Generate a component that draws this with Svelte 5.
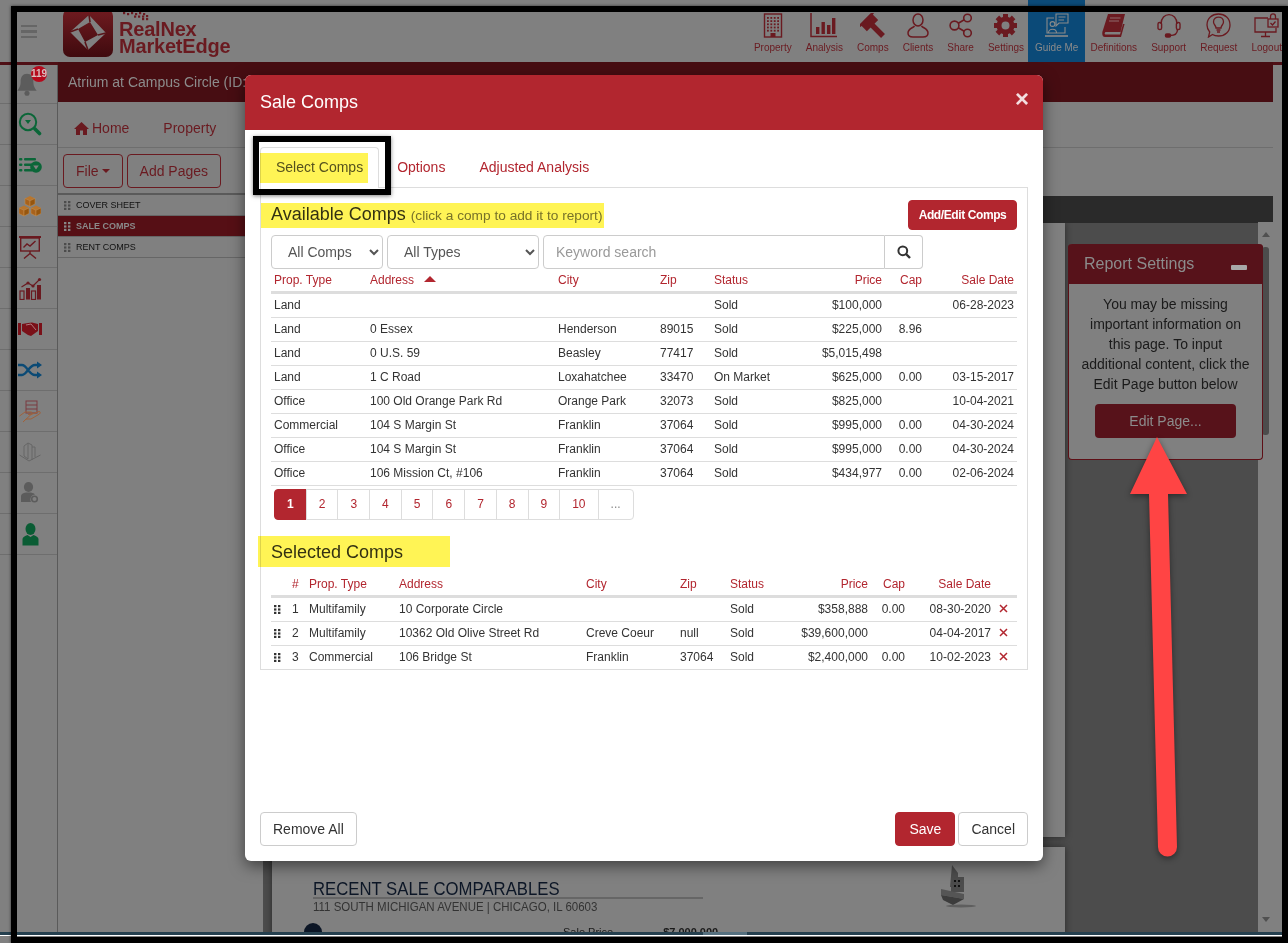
<script>
  const gearAngles = [0, 45, 90, 135, 180, 225, 270, 315];
  const windowDots = [];
  for (let r = 0; r < 5; r++) for (let c = 0; c < 4; c++) windowDots.push([4 + c * 3.4, 4 + r * 3.2]);
  const logoDots = [[0, 0], [4, 1], [8, 0], [12, 1], [16, 0], [20, 1], [11, 3.5], [15, 3.5], [19, 3.5], [23, 3], [19, 6], [23, 6]];

  const available = [
    ["Land", "", "", "", "Sold", "$100,000", "", "06-28-2023"],
    ["Land", "0 Essex", "Henderson", "89015", "Sold", "$225,000", "8.96", ""],
    ["Land", "0 U.S. 59", "Beasley", "77417", "Sold", "$5,015,498", "", ""],
    ["Land", "1 C Road", "Loxahatchee", "33470", "On Market", "$625,000", "0.00", "03-15-2017"],
    ["Office", "100 Old Orange Park Rd", "Orange Park", "32073", "Sold", "$825,000", "", "10-04-2021"],
    ["Commercial", "104 S Margin St", "Franklin", "37064", "Sold", "$995,000", "0.00", "04-30-2024"],
    ["Office", "104 S Margin St", "Franklin", "37064", "Sold", "$995,000", "0.00", "04-30-2024"],
    ["Office", "106 Mission Ct, #106", "Franklin", "37064", "Sold", "$434,977", "0.00", "02-06-2024"]
  ];

  const selected = [
    ["Multifamily", "10 Corporate Circle", "", "", "Sold", "$358,888", "0.00", "08-30-2020"],
    ["Multifamily", "10362 Old Olive Street Rd", "Creve Coeur", "null", "Sold", "$39,600,000", "", "04-04-2017"],
    ["Commercial", "106 Bridge St", "Franklin", "37064", "Sold", "$2,400,000", "0.00", "10-02-2023"]
  ];

  const pages = ["1", "2", "3", "4", "5", "6", "7", "8", "9", "10", "..."];
  const reportPages = ["Cover Sheet", "Sale Comps", "Rent Comps"];
</script>

{#snippet grip(c)}
  <svg class="grip" width="7" height="9" viewBox="0 0 7 9" fill={c}>
    <rect x="0" y="0" width="2.4" height="2.2" /><rect x="4" y="0" width="2.4" height="2.2" />
    <rect x="0" y="3.4" width="2.4" height="2.2" /><rect x="4" y="3.4" width="2.4" height="2.2" />
    <rect x="0" y="6.8" width="2.4" height="2.2" /><rect x="4" y="6.8" width="2.4" height="2.2" />
  </svg>
{/snippet}

{#snippet cube(x, y)}
  <g transform="translate({x} {y})">
    <path d="M5 0 L10 2.4 L5 4.8 L0 2.4 Z" fill="#b8762e" />
    <path d="M0 2.4 L5 4.8 V10.5 L0 8 Z" fill="#a8621c" stroke="#c8904e" stroke-width="0.5" />
    <path d="M10 2.4 L5 4.8 V10.5 L10 8 Z" fill="#96560f" stroke="#c8904e" stroke-width="0.5" />
  </g>
{/snippet}

<div class="app">
  <header class="topbar">
    <div class="burger"><i></i><i></i><i></i></div>
    <div class="logo">
      <svg class="logo-mark" width="50" height="48" viewBox="0 0 50 48">
        <defs>
          <linearGradient id="lg" x1="0" y1="0" x2="0" y2="1">
            <stop offset="0" stop-color="#701b20" />
            <stop offset="1" stop-color="#3f0a0e" />
          </linearGradient>
        </defs>
        <rect width="50" height="48" rx="7" fill="url(#lg)" />
        <path d="M26 6 L43 24 L25 41 L7 23 Z M27 13 L15 20 L22 33 L35 26 Z" fill="#808080" fill-rule="evenodd" />
        <path d="M15 20 L7 23 M27 13 L26 6 M35 26 L43 24 M22 33 L25 41" stroke="#5a1418" stroke-width="1.6" />
      </svg>
      <div class="logo-side">
        <svg class="logo-dots" width="28" height="9" viewBox="0 0 28 9" fill="#6a1a20">
          {#each logoDots as d}<rect x={d[0]} y={d[1]} width="2.2" height="2.2" />{/each}
        </svg>
        <div class="logo-text"><span>RealNex</span><span>MarketEdge</span></div>
      </div>
    </div>
    <nav class="mainnav">
      <div class="nav-item">
        <svg width="20" height="25" viewBox="0 0 20 25" fill="none" stroke="#6a1a20">
          <rect x="1.5" y="1" width="17" height="23" stroke-width="1.4" />
          {#each windowDots as d}<rect x={d[0]} y={d[1]} width="1.8" height="1.8" fill="#6a1a20" stroke="none" />{/each}
          <rect x="7.5" y="20" width="5" height="4" fill="#6a1a20" stroke="none" />
        </svg>
        <span>Property</span>
      </div>
      <div class="nav-item">
        <svg width="28" height="25" viewBox="0 0 28 25" fill="#6a1a20">
          <path d="M1 0 V23.5 H27" fill="none" stroke="#6a1a20" stroke-width="1.5" />
          <rect x="6" y="14" width="3.4" height="7" /><rect x="11.5" y="9" width="3.4" height="12" />
          <rect x="17" y="12" width="3.4" height="9" /><rect x="22" y="5" width="3.4" height="16" />
        </svg>
        <span>Analysis</span>
      </div>
      <div class="nav-item">
        <svg width="25" height="25" viewBox="0 0 25 25" fill="#6a1a20">
          <rect x="-8" y="-5" width="16" height="10" transform="translate(9 9) rotate(-45)" />
          <rect x="-9.5" y="-1" width="19" height="2" transform="translate(6.5 6.5) rotate(-45)" />
          <path d="M9 9 L23 23" stroke="#6a1a20" stroke-width="5.5" />
        </svg>
        <span>Comps</span>
      </div>
      <div class="nav-item">
        <svg width="22" height="25" viewBox="0 0 22 25" fill="none" stroke="#6a1a20" stroke-width="1.5">
          <ellipse cx="11" cy="7" rx="5" ry="6" />
          <path d="M7.5 13 C6 15 1 15.5 1 20 C1 23 3 24 6 24 H16 C19 24 21 23 21 20 C21 15.5 16 15 14.5 13" />
        </svg>
        <span>Clients</span>
      </div>
      <div class="nav-item">
        <svg width="24" height="25" viewBox="0 0 24 25" fill="none" stroke="#6a1a20" stroke-width="1.6">
          <circle cx="5.5" cy="12.5" r="4.4" /><circle cx="18.5" cy="5" r="3.8" /><circle cx="18.5" cy="20" r="3.8" />
          <path d="M9.3 10.3 L15.2 6.8 M9.3 14.7 L15.2 18.2" />
        </svg>
        <span>Share</span>
      </div>
      <div class="nav-item">
        <svg width="25" height="25" viewBox="0 0 25 25">
          <circle cx="12.5" cy="12.5" r="6.5" fill="none" stroke="#6a1a20" stroke-width="5" />
          {#each gearAngles as a}
            <rect x="10" y="1" width="5" height="5" fill="#6a1a20" transform="rotate({a} 12.5 12.5)" />
          {/each}
        </svg>
        <span>Settings</span>
      </div>
      <div class="nav-item guide">
        <svg width="25" height="25" viewBox="0 0 25 25" fill="none" stroke="#8a8a8a" stroke-width="1.1">
          <path d="M10 5 H3 V20 H21 V14" />
          <path d="M1 23 H24" stroke-width="1.6" />
          <path d="M12 1 H24 V10 H15 L12 13 Z" />
          <path d="M14.5 4 H21.5 M14.5 7 H20" />
          <circle cx="8.5" cy="11" r="2.4" />
          <path d="M4.5 20 C4.5 15 12.5 15 12.5 20" />
        </svg>
        <span>Guide Me</span>
      </div>
      <div class="nav-item">
        <svg width="24" height="25" viewBox="0 0 24 25" fill="#6a1a20">
          <path d="M6 1 H23 L18.5 19 H4 C2.5 19 2 21.5 4 21.5 H18 L19 18 L21 11 L22.6 11 L19 24 H3 C-0.5 24 0 19 1 17 Z" />
          <path d="M8 5 H18.5 M7 8 H17" stroke="#8f6a6c" stroke-width="1" />
        </svg>
        <span>Definitions</span>
      </div>
      <div class="nav-item">
        <svg width="24" height="25" viewBox="0 0 24 25" fill="none" stroke="#6a1a20" stroke-width="1.4">
          <path d="M4 11 C4 -1.5 20 -1.5 20 11" />
          <rect x="1" y="9.5" width="3.6" height="7" rx="1.6" /><rect x="19.4" y="9.5" width="3.6" height="7" rx="1.6" />
          <path d="M20.5 16.5 C20.5 21 17 22.5 13 22.5" />
          <rect x="8.5" y="21" width="5" height="3" rx="1.2" fill="#6a1a20" />
        </svg>
        <span>Support</span>
      </div>
      <div class="nav-item">
        <svg width="25" height="25" viewBox="0 0 25 25" fill="none" stroke="#6a1a20" stroke-width="1.3">
          <path d="M12.5 1 C19 1 24 5.5 24 12 C24 18.5 19 23 12.5 23 C10 23 8 22.5 6.5 21.5 L2.5 24 L3.7 19 C2 17 1 15 1 12 C1 5.5 6 1 12.5 1 Z" />
          <path d="M10 15 C10 12.5 7.5 11.5 7.5 9 C7.5 2.5 17.5 2.5 17.5 9 C17.5 11.5 15 12.5 15 15 Z" />
          <path d="M10.5 17 H14.5 M11 19 H14" />
        </svg>
        <span>Request</span>
      </div>
      <div class="nav-item">
        <svg width="25" height="25" viewBox="0 0 25 25" fill="none" stroke="#6a1a20" stroke-width="1.3">
          <path d="M14 5 H1 V19 H22 V15" />
          <path d="M11.5 19 V23 M7 23.5 H16" />
          <rect x="14" y="6" width="10" height="8" fill="#808080" />
          <path d="M16.5 6 V3.5 C16.5 0 21.5 0 21.5 3.5 V6" />
          <path d="M16.5 10 L18.5 12 L21.5 8.5" />
        </svg>
        <span>Logout</span>
      </div>
    </nav>
  </header>

  <div class="workspace">
    <aside class="sidebar">
      <div class="side-row bell">
        <svg width="22" height="24" viewBox="0 0 26 28" fill="#5c5c5c">
          <path d="M13 2 C8 2 5.5 6 5.5 11 C5.5 17 3.5 19 1.5 22 H24.5 C22.5 19 20.5 17 20.5 11 C20.5 6 18 2 13 2 Z" />
          <circle cx="13" cy="25" r="3" />
        </svg>
        <span class="badge">119</span>
      </div>
      <div class="side-row">
        <svg width="24" height="24" viewBox="0 0 24 24" fill="none" stroke="#0b6638" stroke-width="2">
          <circle cx="10" cy="10" r="8.2" />
          <path d="M7 8 H13 L10 12 Z" fill="#0b6638" stroke="none" />
          <path d="M17 17 L21.5 21.5" stroke-width="3.6" stroke-linecap="round" />
        </svg>
      </div>
      <div class="side-row">
        <svg width="23" height="16" viewBox="0 0 23 16" fill="#0b6638">
          <rect x="0" y="1" width="3.4" height="2.6" rx="1" /><rect x="5" y="1" width="12" height="2.6" rx="1" />
          <rect x="0" y="6.5" width="3.4" height="2.6" rx="1" /><rect x="5" y="6.5" width="9" height="2.6" rx="1" />
          <rect x="0" y="12" width="3.4" height="2.6" rx="1" /><rect x="5" y="12" width="9" height="2.6" rx="1" />
          <circle cx="17" cy="10" r="5.8" />
          <path d="M14.2 8.4 H19.8 L17 12.6 Z" fill="#808080" />
        </svg>
      </div>
      <div class="side-row">
        <svg width="22" height="21" viewBox="0 0 22 21">
          {@render cube(6, 0)}
          {@render cube(0, 9.5)}
          {@render cube(12, 9.5)}
        </svg>
      </div>
      <div class="side-row">
        <svg width="22" height="23" viewBox="0 0 22 23" fill="none" stroke="#6a1a20" stroke-width="1.4">
          <path d="M0 1 H22" stroke-width="2" />
          <rect x="1.7" y="2" width="18.6" height="13" />
          <path d="M4.5 11.5 L8 8 L11 10 L16.5 5" />
          <path d="M11 15 V18 M11 17.5 L5 22.5 M11 17.5 L17 22.5" />
        </svg>
      </div>
      <div class="side-row">
        <svg width="23" height="23" viewBox="0 0 23 23">
          <rect x="1" y="14" width="4" height="8.5" fill="none" stroke="#6a1a20" stroke-width="1.2" />
          <rect x="7" y="11" width="4" height="11.5" fill="#6a1a20" />
          <rect x="12.5" y="14" width="4" height="8.5" fill="none" stroke="#6a1a20" stroke-width="1.2" />
          <rect x="18" y="8" width="4" height="14.5" fill="#6a1a20" />
          <path d="M2.5 10 L9 6 L14 9 L20.5 2.5" fill="none" stroke="#6a1a20" stroke-width="1.2" />
          <circle cx="9" cy="6" r="1.6" fill="#6a1a20" /><circle cx="14" cy="9" r="1.6" fill="#6a1a20" /><circle cx="20.5" cy="2.5" r="1.6" fill="#6a1a20" />
        </svg>
      </div>
      <div class="side-row">
        <svg width="24" height="14" viewBox="0 0 24 14" fill="#7a1018">
          <rect x="0" y="1" width="3" height="12" /><rect x="21" y="1" width="3" height="12" />
          <path d="M4 2 L10 1 L14 0.5 L20 2 V9 L13 14 L10 13 L4 9 Z" />
          <path d="M8 3 L13 2 L18 8" fill="none" stroke="#b07a7e" stroke-width="1" />
        </svg>
      </div>
      <div class="side-row">
        <svg width="24" height="19" viewBox="0 0 24 19" fill="none" stroke="#0b4a75" stroke-width="2.4">
          <path d="M0 4 H4 C9 4 11 14 17 14 H20 M0 14 H4 C9 14 11 4 17 4 H20" />
          <path d="M19 0.5 L24 4 L19 7.5 Z M19 10.5 L24 14 L19 17.5 Z" fill="#0b4a75" stroke="none" />
        </svg>
      </div>
      <div class="side-row">
        <svg width="22" height="23" viewBox="0 0 22 23" fill="none" stroke="#a0623a" stroke-width="1">
          <rect x="7" y="1" width="11" height="12" stroke="#7a3a40" />
          <path d="M7 5 H18 M7 9 H18" stroke="#7a3a40" />
          <path d="M0.5 16 L6 12 H12 C13.5 12 13.5 14 12 14.5 H9 M12 14.5 L20 11.5 C21.5 11.5 21.5 13 20.5 14 L12 19 H7 L4 22 Z" />
        </svg>
      </div>
      <div class="side-row">
        <svg width="22" height="20" viewBox="0 0 22 20" fill="none" stroke="#666" stroke-width="1">
          <path d="M5 4 L9 1 V17 L5 14 Z M9 1 L13 3 V18 M13 5 H16 V15" />
          <path d="M0.5 13 L10 19 L21.5 13" />
        </svg>
      </div>
      <div class="side-row">
        <svg width="18" height="22" viewBox="0 0 18 22" fill="#5c5c5c">
          <ellipse cx="7.5" cy="5" rx="4.6" ry="5" />
          <path d="M0 20 V14 C0 12 2 11 5 10.5 H10 C12 11 13 11.5 14 12.5 A5 5 0 0 0 10 20 Z" />
          <circle cx="13.5" cy="17" r="2.8" fill="none" stroke="#5c5c5c" stroke-width="1.6" />
        </svg>
      </div>
      <div class="side-row">
        <svg width="17" height="23" viewBox="0 0 17 23" fill="#0a5c34">
          <ellipse cx="8.5" cy="6" rx="5" ry="6" />
          <path d="M0.5 22.5 V16 C0.5 14 3 13 5.5 12 L8.5 14 L11.5 12 C14 13 16.5 14 16.5 16 V22.5 Z" />
        </svg>
      </div>
    </aside>

    <main class="content">
      <div class="titlebar">
        <span class="title">Atrium at Campus Circle (ID:1)</span>
        <span class="title-tab"></span>
      </div>
      <div class="pagenav">
        <span class="pagenav-link">
          <svg width="15" height="13" viewBox="0 0 15 13" fill="#6a1a20"><path d="M7.5 0 L15 7 H13 V13 H9 V8.5 H6 V13 H2 V7 H0 Z" /></svg>
          Home
        </span>
        <span class="pagenav-link">Property</span>
      </div>
      <div class="toolbar">
        <span class="tool-btn">File <i class="caret"></i></span>
        <span class="tool-btn">Add Pages</span>
      </div>
      <div class="report">
        <div class="report-list">
          {#each reportPages as p, i}
            <div class="report-row" class:current={i === 1}>{@render grip(i === 1 ? "#888" : "#4c4c4c")}{p}</div>
          {/each}
        </div>
        <div class="report-view">
          <div class="view-bar"></div>
          <div class="view-body">
            <div class="canvas">
              <div class="sheet first"></div>
              <div class="sheet second">
                <div class="sheet-head">
                  <div>
                    <h3><span>RECENT SALE COMPARABLES</span></h3>
                    <p><span>111 SOUTH MICHIGAN AVENUE | CHICAGO, IL 60603</span></p>
                  </div>
                  <svg width="38" height="44" viewBox="0 0 38 44">
                    <path d="M12 0 L18 8 V22 H10 Z" fill="#4c4c4c" />
                    <rect x="11" y="12" width="13" height="15" fill="#4c4c4c" />
                    <rect x="14" y="15" width="2" height="2" fill="#111" /><rect x="18" y="15" width="2" height="2" fill="#111" />
                    <rect x="14" y="20" width="2" height="2" fill="#111" /><rect x="18" y="20" width="2" height="2" fill="#111" />
                    <path d="M1 24 L24 29 V34 L1 30 Z" fill="#555" />
                    <path d="M1 30 L24 34 L13 40 L3 35 Z" fill="#3c3c3c" />
                    <ellipse cx="21" cy="41" rx="15" ry="1.5" fill="#5e5e5e" />
                  </svg>
                </div>
                <div class="sheet-row">
                  <i class="dot"></i>
                  <span>Sale Price</span>
                  <b>$7,000,000</b>
                </div>
              </div>
            </div>
            <div class="scroll">
              <i class="arrow up"></i>
              <div class="thumb"></div>
              <i class="arrow down"></i>
            </div>
          </div>
        </div>
      </div>
      <div class="settings">
        <div class="settings-head">Report Settings <i></i></div>
        <div class="settings-body">
          <p>You may be missing important information on this page. To input additional content, click the Edit Page button below</p>
          <span class="edit-btn">Edit Page...</span>
        </div>
      </div>
    </main>
  </div>
  <div class="statusbar"><i></i></div>
</div>

<section class="modal">
  <div class="modal-head">
    <h2>Sale Comps</h2>
    <span class="close">&times;</span>
  </div>
  <div class="modal-body">
    <ul class="tabs">
      <li class="active">Select Comps</li>
      <li>Options</li>
      <li>Adjusted Analysis</li>
    </ul>
    <div class="tab-pane">
      <div class="pane-head">
        <h4>Available Comps <small>(click a comp to add it to report)</small></h4>
        <button class="btn-red small">Add/Edit Comps</button>
      </div>
      <div class="filters">
        <select class="sel-comps"><option>All Comps</option></select>
        <select class="sel-types"><option>All Types</option></select>
        <input type="text" placeholder="Keyword search" />
        <button class="search" aria-label="Search">
          <svg width="14" height="14" viewBox="0 0 14 14" fill="none" stroke="#333" stroke-width="2">
            <circle cx="5.8" cy="5.8" r="4.4" /><path d="M9 9 L13 13" stroke-width="2.4" />
          </svg>
        </button>
      </div>

      <table class="grid">
        <colgroup>
          <col style="width:96px" /><col style="width:188px" /><col style="width:102px" /><col style="width:54px" />
          <col style="width:89px" /><col style="width:85px" /><col style="width:40px" /><col style="width:92px" />
        </colgroup>
        <thead>
          <tr>
            <th>Prop. Type</th>
            <th>Address <i class="sort"></i></th>
            <th>City</th><th>Zip</th><th>Status</th>
            <th class="r">Price</th><th class="r">Cap</th><th class="r">Sale Date</th>
          </tr>
        </thead>
        <tbody>
          {#each available as row}
            <tr>
              {#each row as cell, i}
                <td class:r={i > 4}>{cell}</td>
              {/each}
            </tr>
          {/each}
        </tbody>
      </table>

      <div class="pager">
        {#each pages as p, i}
          <span class:on={i === 0} class:more={p === "..."}>{p}</span>
        {/each}
      </div>

      <h4 class="selected-title">Selected Comps</h4>

      <table class="grid chosen">
        <colgroup>
          <col style="width:18px" /><col style="width:17px" /><col style="width:90px" /><col style="width:187px" />
          <col style="width:94px" /><col style="width:50px" /><col style="width:63px" /><col style="width:81px" />
          <col style="width:37px" /><col style="width:86px" /><col style="width:23px" />
        </colgroup>
        <thead>
          <tr>
            <th></th><th>#</th><th>Prop. Type</th><th>Address</th><th>City</th><th>Zip</th><th>Status</th>
            <th class="r">Price</th><th class="r">Cap</th><th class="r">Sale Date</th><th></th>
          </tr>
        </thead>
        <tbody>
          {#each selected as row, n}
            <tr>
              <td>{@render grip("#333")}</td>
              <td>{n + 1}</td>
              {#each row as cell, i}
                <td class:r={i > 4}>{cell}</td>
              {/each}
              <td class="del">
                <svg width="9" height="9" viewBox="0 0 9 9" stroke="#b2262f" stroke-width="1.5"><path d="M1 1 L8 8 M8 1 L1 8" /></svg>
              </td>
            </tr>
          {/each}
        </tbody>
      </table>
    </div>
  </div>
  <div class="modal-foot">
    <button class="btn-plain">Remove All</button>
    <span class="foot-right">
      <button class="btn-red save">Save</button>
      <button class="btn-plain">Cancel</button>
    </span>
  </div>
</section>

<!-- annotations drawn on top of the screenshot -->
<div class="mark mark-tab"></div>
<div class="mark mark-avail"></div>
<div class="mark mark-sel"></div>
<div class="callout-box"></div>
<svg class="callout-arrow" width="90" height="440" viewBox="0 0 90 440">
  <path d="M30 0 L60 57 L41 57 L50 410 A9.5 9.5 0 0 1 31 410 L22 57 L3 57 Z" fill="#ff4444" />
</svg>
<div class="frame"></div>

<style>
  :global(body) {
    margin: 0;
    overflow: hidden;
    background: #808080;
    font-family: "Liberation Sans", Arial, sans-serif;
    color: #1a1a1a;
  }

  h2, h3, h4, p, ul { margin: 0; padding: 0; }

  /* the page behind the open dialog: every colour here is already dimmed */
  .app {
    width: 1288px;
    height: 943px;
    display: flex;
    flex-direction: column;
    overflow: hidden;
    background: #808080;
  }

  .topbar {
    height: 62px;
    flex: none;
    display: flex;
    align-items: flex-start;
    overflow: hidden;
  }
  .burger {
    margin: 25px 0 0 21px;
    width: 16px;
    display: flex;
    flex-direction: column;
    gap: 3px;
  }
  .burger i { height: 2.4px; background: #666; display: block; }
  .logo {
    margin: 9px 0 0 26px;
    display: flex;
    gap: 6px;
  }
  .logo-dots { display: block; margin: 3px 0 0 4px; }
  .logo-text {
    display: flex;
    flex-direction: column;
    font-weight: bold;
    font-size: 20px;
    line-height: 17px;
    letter-spacing: -0.2px;
    color: #6a1a20;
  }
  .mainnav {
    margin-left: auto;
    margin-right: -1px;
    display: flex;
    height: 62px;
  }
  .nav-item {
    padding: 13px 7px 0;
    display: flex;
    flex-direction: column;
    align-items: center;
    font-size: 10px;
    line-height: 11px;
    color: #6a1a20;
    gap: 4px;
  }
  .nav-item svg { display: block; height: 25px; }
  .nav-item.guide { background: #0b4a78; color: #8a8a8a; margin: 0 -2px 0 -3px; }

  .workspace {
    flex: 1;
    min-height: 0;
    display: flex;
    border-top: 3px solid #4f0f15;
  }
  .sidebar {
    width: 57px;
    flex: none;
    border-right: 1px solid #5a5a5a;
  }
  .side-row {
    height: 40px;
    border-bottom: 1px solid #6e6e6e;
    display: flex;
    align-items: center;
    justify-content: center;
    padding-left: 3px;
    position: relative;
  }
  .side-row:first-child { height: 38px; }
  .side-row.bell { padding-left: 0; padding-right: 4px; }
  .badge {
    position: absolute;
    left: 31px;
    top: 1px;
    width: 16px;
    height: 16px;
    border-radius: 50%;
    background: #b5091c;
    color: #d8c0c0;
    font-size: 10px;
    line-height: 16px;
    text-align: center;
    font-weight: bold;
  }

  .content {
    flex: none;
    width: 1215px;
    margin-top: -3px;
    display: flex;
    flex-direction: column;
    min-height: 0;
    position: relative;
  }
  .titlebar {
    height: 40px;
    flex: none;
    background: #470d12;
    display: flex;
    align-items: center;
    padding-left: 10px;
    color: #8c8c8c;
    font-size: 14px;
  }
  .title-tab {
    width: 58px;
    height: 4px;
    background: #a4a4a4;
    border-radius: 3px 3px 0 0;
    margin: 0 0 10px 404px;
  }
  .pagenav {
    height: 46px;
    flex: none;
    border-bottom: 1px solid #6e6e6e;
    display: flex;
    align-items: center;
    gap: 34px;
    padding-left: 16px;
    padding-top: 7px;
    box-sizing: border-box;
    font-size: 14px;
    color: #6a1a20;
  }
  .pagenav-link { display: flex; align-items: center; gap: 3px; }
  .toolbar {
    height: 45px;
    flex: none;
    display: flex;
    gap: 4px;
    padding: 6px 0 0 5px;
    box-sizing: border-box;
  }
  .tool-btn {
    height: 34px;
    box-sizing: border-box;
    padding: 0 12px;
    border: 1px solid #6a1a20;
    border-radius: 4px;
    color: #6a1a20;
    font-size: 14px;
    display: flex;
    align-items: center;
    gap: 3px;
  }
  .caret {
    border-top: 4px solid #6a1a20;
    border-left: 4px solid transparent;
    border-right: 4px solid transparent;
  }
  .report {
    flex: 1;
    min-height: 0;
    display: flex;
  }
  .report-list {
    width: 205px;
    flex: none;
    border-top: 2px solid #5a5a5a;
  }
  .report-row {
    height: 20px;
    margin-bottom: 1px;
    box-shadow: 0 1px 0 #666;
    font-size: 9px;
    line-height: 20px;
    text-transform: uppercase;
    display: flex;
    align-items: center;
    gap: 5px;
    padding-left: 6px;
    color: #111;
  }
  .report-row.current { background: #560f15; color: #8a8a8a; font-weight: bold; }
  .report-view {
    flex: 1;
    min-width: 0;
    display: flex;
    flex-direction: column;
    padding-top: 3px;
  }
  .view-bar { height: 27px; flex: none; background: #2a2a2a; }
  .view-body { flex: 1; min-height: 0; display: flex; }
  .canvas {
    width: 995px;
    flex: none;
    background: #4c4c4c;
    padding-left: 9px;
    box-sizing: border-box;
    overflow: hidden;
  }
  .sheet {
    width: 793px;
    background: #808080;
    box-shadow: 0 0 7px rgba(0, 0, 0, 0.45);
  }
  .sheet.first { height: 614px; margin-bottom: 10px; }
  .sheet.second { height: 200px; padding: 19px 41px 0; box-sizing: border-box; overflow: hidden; }
  .sheet-head {
    display: flex;
    justify-content: space-between;
    width: 665px;
  }
  .sheet-head svg { margin-top: -1px; }
  .sheet-head > div { width: 390px; padding-top: 12px; }
  .sheet-head h3 {
    font-weight: normal;
    font-size: 19px;
    line-height: 22px;
    color: #0c1626;
    border-bottom: 2px solid #666;
    height: 19px;
  }
  .sheet-head h3 span,
  .sheet-head p span {
    display: inline-block;
    white-space: nowrap;
    transform-origin: left center;
    transform: scaleX(0.88);
  }
  .sheet-head p {
    font-size: 12.5px;
    line-height: 15px;
    color: #333;
    margin-top: 1px;
    white-space: nowrap;
  }
  .sheet-head p span { transform: scaleX(0.92); }
  .sheet-row {
    display: flex;
    align-items: center;
    font-size: 11px;
    margin-top: 8px;
  }
  .dot { width: 18px; height: 18px; border-radius: 50%; background: #0c1626; margin-left: -9px; }
  .sheet-row span { margin-left: 241px; }
  .sheet-row b { margin-left: 50px; }
  .scroll {
    width: 15px;
    flex: none;
    background: #808080;
    display: flex;
    flex-direction: column;
    align-items: center;
    margin-top: -1px;
  }
  .arrow { width: 0; height: 0; border-left: 4.5px solid transparent; border-right: 4.5px solid transparent; }
  .arrow.up { border-bottom: 5px solid #505050; margin-top: 10px; }
  .arrow.down { border-top: 5px solid #505050; margin-top: 482px; }
  .thumb { width: 7px; height: 188px; background: #4c4c4c; border-radius: 3px; margin-top: 10px; }

  .settings {
    position: absolute;
    left: 1010px;
    top: 182px;
    width: 195px;
    border: 1px solid #5e0f16;
    border-top: none;
    border-radius: 4px;
    background: #808080;
    box-sizing: border-box;
  }
  .settings-head {
    height: 40px;
    background: #57121a;
    color: #8c8c8c;
    font-size: 16px;
    padding: 11px 16px 0;
    box-sizing: border-box;
    border-radius: 4px 4px 0 0;
    margin: 0 -1px;
    position: relative;
  }
  .settings-head i {
    position: absolute;
    right: 16px;
    top: 21px;
    width: 16px;
    height: 5px;
    background: #a8a8a8;
    border-radius: 1px;
  }
  .settings-body {
    height: 175px;
    padding: 10px 10px 0;
    box-sizing: border-box;
    font-size: 14px;
    line-height: 20px;
    text-align: center;
    display: flex;
    flex-direction: column;
    align-items: center;
  }
  .edit-btn {
    margin-top: 10px;
    width: 141px;
    height: 34px;
    line-height: 34px;
    background: #57121a;
    border-radius: 4px;
    color: #8c8c8c;
  }

  .statusbar {
    height: 3px;
    flex: none;
    margin-bottom: 7px;
    background: #25404f;
    border-bottom: 1px solid #fff;
    display: flex;
    padding-left: 703px;
  }
  .statusbar i { width: 44px; background: #55707f; }

  .modal {
    position: absolute;
    z-index: 2;
    left: 245px;
    top: 75px;
    width: 798px;
    height: 786px;
    background: #fff;
    border-radius: 6px;
    box-shadow: 0 5px 15px rgba(0, 0, 0, 0.5);
    display: flex;
    flex-direction: column;
    overflow: hidden;
    color: #333;
  }
  .modal-head {
    height: 55px;
    flex: none;
    background: #b2262f;
    color: #fff;
    display: flex;
    align-items: center;
    justify-content: space-between;
    padding: 0 14px 0 15px;
  }
  .modal-head h2 { font-size: 18px; font-weight: normal; }
  .close { font-size: 24px; font-weight: bold; line-height: 1; margin: -7px 0 0; opacity: 0.85; }
  .modal-body { padding: 17px 15px 0; flex: 1; }

  .tabs { list-style: none; display: flex; gap: 2px; margin-bottom: -1px; }
  .tabs li {
    padding: 9px 15px 11px;
    font-size: 14px;
    line-height: 20px;
    color: #b2262f;
    border: 1px solid transparent;
    border-bottom: none;
  }
  .tabs li.active {
    color: #555;
    background: #fff;
    border-color: #ddd;
    border-radius: 4px 4px 0 0;
    position: relative;
  }
  .tab-pane {
    border: 1px solid #ddd;
    height: 483px;
    box-sizing: border-box;
    padding: 0 10px;
  }
  .pane-head {
    display: flex;
    justify-content: space-between;
    align-items: center;
    padding-top: 12px;
    height: 30px;
  }
  .pane-head h4 { font-size: 18px; font-weight: normal; margin-top: -2px; }
  .pane-head small { font-size: 13.7px; color: #777; }
  .filters {
    display: flex;
    gap: 4px;
    margin-top: 5px;
    height: 34px;
  }
  select, input {
    font: inherit;
    font-size: 14px;
    height: 34px;
    box-sizing: border-box;
    border: 1px solid #ccc;
    border-radius: 4px;
    color: #555;
    background: #fff;
  }
  select { padding: 0 0 0 12px; }
  .sel-comps { width: 112px; }
  .sel-types { width: 152px; }
  input {
    width: 342px;
    padding: 0 12px;
    border-radius: 4px 0 0 4px;
  }
  input::placeholder { color: #999; }
  .search {
    width: 38px;
    margin-left: -4px;
    border: 1px solid #ccc;
    border-left: none;
    border-radius: 0 4px 4px 0;
    background: #fff;
    display: flex;
    align-items: center;
    justify-content: center;
    padding: 0;
  }
  .grid {
    border-collapse: collapse;
    table-layout: fixed;
    width: 746px;
    font-size: 12px;
  }
  .grid th {
    height: 22px;
    padding: 0 3px;
    font-weight: normal;
    text-align: left;
    color: #b2262f;
    border-bottom: 3px solid #ddd;
    white-space: nowrap;
  }
  .grid td {
    height: 21px;
    padding: 0 3px 2px;
    border-bottom: 1px solid #ddd;
    white-space: nowrap;
    overflow: hidden;
  }
  .grid .r { text-align: right; }
  .sort {
    display: inline-block;
    margin: 0 0 2px 7px;
    border-bottom: 6px solid #b2262f;
    border-left: 6px solid transparent;
    border-right: 6px solid transparent;
  }
  .pager {
    display: flex;
    margin: 3px 0 0 3px;
    height: 31px;
  }
  .pager span {
    padding: 0 12px;
    border: 1px solid #ddd;
    margin-left: -1px;
    font-size: 12px;
    line-height: 29px;
    color: #b2262f;
  }
  .pager span:first-child { margin-left: 0; border-radius: 4px 0 0 4px; }
  .pager span:last-child { border-radius: 0 4px 4px 0; }
  .pager .on { background: #b2262f; border-color: #b2262f; color: #fff; font-weight: bold; }
  .pager .more { color: #888; }
  .selected-title {
    font-size: 18px;
    font-weight: normal;
    line-height: 20px;
    margin-top: 22px;
    height: 20px;
  }
  .chosen { margin-top: 10px; }
  .chosen th { height: 23px; }
  .chosen tr:last-child td { border-bottom: none; }
  .chosen .del { padding: 0 0 2px 5px; }
  .chosen .del svg { display: block; }
  .grip { display: inline-block; vertical-align: middle; flex: none; }

  .modal-foot {
    flex: none;
    display: flex;
    justify-content: space-between;
    padding: 0 15px 15px;
  }
  .foot-right { display: flex; gap: 3px; }
  button { font: inherit; cursor: pointer; }
  .btn-plain {
    height: 34px;
    padding: 0 12px;
    font-size: 14px;
    color: #333;
    background: #fff;
    border: 1px solid #ccc;
    border-radius: 4px;
  }
  .btn-red {
    background: #b2262f;
    color: #fff;
    border: 1px solid #b2262f;
    border-radius: 4px;
    font-size: 14px;
    height: 34px;
    padding: 0 13px;
  }
  .btn-red.small { font-size: 12px; font-weight: bold; letter-spacing: -0.4px; height: 30px; width: 109px; padding: 0; }

  .mark {
    position: absolute;
    z-index: 3;
    background: #fff455;
    mix-blend-mode: multiply;
  }
  .mark-tab { left: 260px; top: 153px; width: 108px; height: 30px; }
  .mark-avail { left: 261px; top: 203px; width: 343px; height: 25px; }
  .mark-sel { left: 258px; top: 536px; width: 192px; height: 31px; }
  .callout-box {
    position: absolute;
    z-index: 3;
    left: 253px;
    top: 136px;
    width: 138px;
    height: 59px;
    box-sizing: border-box;
    border: 6px solid #000;
    box-shadow: 0 1px 4px rgba(0, 0, 0, 0.5);
  }
  .callout-arrow {
    position: absolute;
    z-index: 3;
    left: 1127px;
    top: 437px;
    overflow: visible;
    filter: drop-shadow(0 2px 3px rgba(0, 0, 0, 0.45));
  }
  .frame {
    position: absolute;
    z-index: 4;
    left: 11px;
    top: 6px;
    width: 1277px;
    height: 937px;
    box-sizing: border-box;
    border: 6px solid #000;
    box-shadow: 0 0 3px rgba(0, 0, 0, 0.6);
    pointer-events: none;
  }
</style>
